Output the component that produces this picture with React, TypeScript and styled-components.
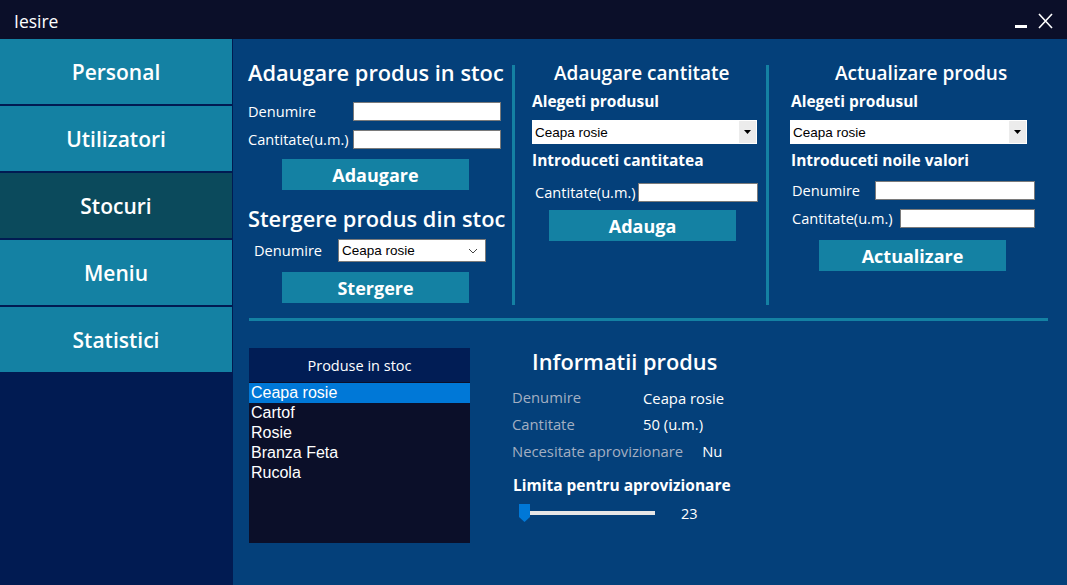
import React from "react";
import styled, { createGlobalStyle } from "styled-components";

const C = {
  title: "#0b0f29",
  teal: "#1481a3",
  navActive: "#0b4a5c",
  sideBg: "#011b52",
  main: "#04407a",
  listHead: "#011d55",
  listBg: "#0b0f29",
  select: "#0078d7",
  muted: "#a3afc2",
};

const GlobalStyle = createGlobalStyle`
  html, body { margin: 0; padding: 0; }
  body {
    background: ${C.sideBg};
    font-family: "Open Sans", "Noto Sans", sans-serif;
    color: #fff;
    overflow: hidden;
  }
  * { box-sizing: border-box; }
`;

const Window = styled.div`
  width: 1067px;
  height: 585px;
  display: flex;
  flex-direction: column;
`;

const TitleBar = styled.header`
  height: 39px;
  flex: none;
  background: ${C.title};
  display: flex;
  align-items: center;
  justify-content: space-between;
  padding: 3px 14px 0 14px;
`;

const TitleText = styled.span`
  font-size: 17.5px;
  line-height: 20px;
`;

const Controls = styled.div`
  display: flex;
  align-items: center;
  gap: 11px;
`;

const Body = styled.div`
  flex: 1;
  display: flex;
  min-height: 0;
`;

const Sidebar = styled.nav`
  width: 233px;
  flex: none;
  background: ${C.sideBg};
  display: flex;
  flex-direction: column;
  gap: 2px;
  padding-right: 1px;
`;

const NavButton = styled.div<{ $active?: boolean }>`
  height: 65px;
  background: ${(p) => (p.$active ? C.navActive : C.teal)};
  display: flex;
  align-items: center;
  justify-content: center;
  font-size: 21px;
  font-weight: 600;
`;

const Main = styled.main`
  flex: 1;
  background: ${C.main};
  padding: 21px 17px 0 15px;
  display: flex;
  flex-direction: column;
`;

const TopRow = styled.div`
  display: grid;
  grid-template-columns: 264px 3px 251px 3px 1fr;
  align-items: start;
`;

const VDivider = styled.div`
  width: 3px;
  height: 240px;
  margin-top: 5px;
  background: ${C.teal};
`;

const Column = styled.section<{ $pad: number }>`
  display: flex;
  flex-direction: column;
  align-items: flex-start;
  padding-left: ${(p) => p.$pad}px;
`;

const BigHeading = styled.h2<{ $mt?: number }>`
  margin: ${(p) => p.$mt ?? 0}px 0 0 0;
  font-size: 21.8px;
  font-weight: 600;
  line-height: 26px;
  white-space: nowrap;
`;

const SectionHeading = styled.h2<{ $indent: number }>`
  margin: 0 0 0 ${(p) => p.$indent}px;
  font-size: 19px;
  font-weight: 600;
  line-height: 26px;
  white-space: nowrap;
`;

const SubLabel = styled.div<{ $mt: number; $indent?: number }>`
  margin-top: ${(p) => p.$mt}px;
  padding-left: ${(p) => p.$indent ?? 0}px;
  font-size: 15.5px;
  font-weight: 700;
  line-height: 22px;
  white-space: nowrap;
`;

const FormRow = styled.div<{ $mt: number; $indent?: number }>`
  display: flex;
  align-items: center;
  margin-top: ${(p) => p.$mt}px;
  padding-left: ${(p) => p.$indent ?? 0}px;
`;

const FieldLabel = styled.label<{ $w: number }>`
  width: ${(p) => p.$w}px;
  flex: none;
  font-size: 14.6px;
  line-height: 19px;
  white-space: nowrap;
`;

const TextBox = styled.div<{ $w: number }>`
  width: ${(p) => p.$w}px;
  height: 19px;
  background: #fff;
  border: 1px solid #7a7a7a;
`;

const ActionButton = styled.div<{ $mt: number; $ml: number }>`
  width: 187px;
  height: 31px;
  margin-top: ${(p) => p.$mt}px;
  margin-left: ${(p) => p.$ml}px;
  background: ${C.teal};
  display: flex;
  align-items: center;
  justify-content: center;
  font-size: 18px;
  font-weight: 700;
`;

const SelectBox = styled.div<{ $w: number }>`
  width: ${(p) => p.$w}px;
  height: 23px;
  background: #fff;
  border: 1px solid #7a7a7a;
  display: flex;
  align-items: center;
  justify-content: space-between;
  padding: 0 7px 0 3px;
  color: #000;
  font-family: "Liberation Sans", Arial, sans-serif;
  font-size: 13.5px;
`;

const Combo = styled.div<{ $w: number; $mt: number }>`
  width: ${(p) => p.$w}px;
  height: 24px;
  margin-top: ${(p) => p.$mt}px;
  background: #fff;
  display: flex;
  align-items: stretch;
  color: #000;
  font-family: "Liberation Sans", Arial, sans-serif;
  font-size: 13.5px;
`;

const ComboText = styled.span`
  flex: 1;
  display: flex;
  align-items: center;
  padding-left: 3px;
`;

const ComboButton = styled.span`
  width: 17px;
  margin: 1px 1px 1px 0;
  background: #ececec;
  display: flex;
  align-items: center;
  justify-content: center;
`;

const HRule = styled.div`
  height: 3px;
  width: 799px;
  margin: 13px 0 0 1px;
  background: ${C.teal};
`;

const BottomRow = styled.div`
  display: flex;
  align-items: flex-start;
  margin-top: 27px;
`;

const ListBox = styled.div`
  width: 221px;
  height: 195px;
  margin-left: 1px;
  background: ${C.listBg};
  display: flex;
  flex-direction: column;
`;

const ListHeader = styled.div`
  height: 34px;
  background: ${C.listHead};
  display: flex;
  align-items: center;
  justify-content: center;
  font-size: 14.5px;
  padding-top: 1px;
`;

const ListItems = styled.ul`
  list-style: none;
  margin: 0;
  padding: 1px 0 0 0;
`;

const ListItem = styled.li<{ $selected?: boolean }>`
  height: 20px;
  line-height: 20px;
  padding-left: 2px;
  font-family: "Liberation Sans", Arial, sans-serif;
  font-size: 16px;
  background: ${(p) => (p.$selected ? C.select : "transparent")};
`;

const InfoPanel = styled.section`
  margin-left: 42px;
  display: flex;
  flex-direction: column;
  align-items: flex-start;
`;

const InfoHeading = styled.h2`
  margin: 0 0 0 20px;
  font-size: 21.8px;
  font-weight: 600;
  line-height: 28px;
  white-space: nowrap;
`;

const InfoRows = styled.dl`
  margin: 7px 0 0 0;
  display: flex;
  flex-direction: column;
`;

const InfoRow = styled.div`
  display: flex;
  align-items: center;
  height: 27px;
  font-size: 14.8px;
`;

const InfoLabel = styled.dt`
  min-width: 131px;
  padding-right: 19px;
  color: ${C.muted};
  white-space: nowrap;
`;

const InfoValue = styled.dd<{ $dy?: number }>`
  margin: 0;
  padding-top: ${(p) => p.$dy ?? 0}px;
  white-space: nowrap;
`;

const SliderRow = styled.div`
  display: flex;
  align-items: center;
  height: 20px;
  margin-top: 7px;
  margin-left: 7px;
`;

const SliderTrack = styled.div`
  position: relative;
  width: 136px;
  height: 20px;
  display: flex;
  align-items: center;
`;

const TrackLine = styled.div`
  margin-left: 4px;
  width: 132px;
  height: 4px;
  background: #e6e6e6;
`;

const Thumb = styled.svg`
  position: absolute;
  left: 0;
  top: 1px;
`;

const SliderValue = styled.span`
  margin-left: 26px;
  font-size: 14.5px;
`;

const Chevron = () => (
  <svg width="10" height="6" viewBox="0 0 10 6">
    <path d="M1 1 L5 5 L9 1" fill="none" stroke="#444" strokeWidth="1" />
  </svg>
);

const Triangle = () => (
  <svg width="7" height="4" viewBox="0 0 7 4">
    <polygon points="0,0 7,0 3.5,4" fill="#000" />
  </svg>
);

const ComboSelect = ({ w, mt }: { w: number; mt: number }) => (
  <Combo $w={w} $mt={mt}>
    <ComboText>Ceapa rosie</ComboText>
    <ComboButton>
      <Triangle />
    </ComboButton>
  </Combo>
);

const navItems = ["Personal", "Utilizatori", "Stocuri", "Meniu", "Statistici"];
const products = ["Ceapa rosie", "Cartof", "Rosie", "Branza Feta", "Rucola"];

export default function App() {
  return (
    <>
      <GlobalStyle />
      <Window>
        <TitleBar>
          <TitleText>Iesire</TitleText>
          <Controls>
            <svg width="13" height="18" viewBox="0 0 13 18">
              <rect x="1" y="13" width="12" height="3" fill="#fff" />
            </svg>
            <svg width="15" height="16" viewBox="0 0 15 16">
              <path d="M1 1 L14 15 M14 1 L1 15" stroke="#fff" strokeWidth="1.6" fill="none" />
            </svg>
          </Controls>
        </TitleBar>
        <Body>
          <Sidebar>
            {navItems.map((n) => (
              <NavButton key={n} $active={n === "Stocuri"}>
                {n}
              </NavButton>
            ))}
          </Sidebar>
          <Main>
            <TopRow>
              <Column $pad={0}>
                <BigHeading>Adaugare produs in stoc</BigHeading>
                <FormRow $mt={16}>
                  <FieldLabel $w={105}>Denumire</FieldLabel>
                  <TextBox $w={148} />
                </FormRow>
                <FormRow $mt={9}>
                  <FieldLabel $w={105}>Cantitate(u.m.)</FieldLabel>
                  <TextBox $w={148} />
                </FormRow>
                <ActionButton $mt={10} $ml={34}>Adaugare</ActionButton>
                <BigHeading $mt={16}>Stergere produs din stoc</BigHeading>
                <FormRow $mt={7} $indent={6}>
                  <FieldLabel $w={84}>Denumire</FieldLabel>
                  <SelectBox $w={148}>
                    <span>Ceapa rosie</span>
                    <Chevron />
                  </SelectBox>
                </FormRow>
                <ActionButton $mt={10} $ml={34}>Stergere</ActionButton>
              </Column>
              <VDivider />
              <Column $pad={17}>
                <SectionHeading $indent={22}>Adaugare cantitate</SectionHeading>
                <SubLabel $mt={4}>Alegeti produsul</SubLabel>
                <ComboSelect w={225} mt={8} />
                <SubLabel $mt={5}>Introduceti cantitatea</SubLabel>
                <FormRow $mt={12} $indent={3}>
                  <FieldLabel $w={103}>Cantitate(u.m.)</FieldLabel>
                  <TextBox $w={120} />
                </FormRow>
                <ActionButton $mt={8} $ml={17}>Adauga</ActionButton>
              </Column>
              <VDivider />
              <Column $pad={21}>
                <SectionHeading $indent={45}>Actualizare produs</SectionHeading>
                <SubLabel $mt={4} $indent={1}>Alegeti produsul</SubLabel>
                <ComboSelect w={237} mt={8} />
                <SubLabel $mt={5} $indent={1}>Introduceti noile valori</SubLabel>
                <FormRow $mt={10} $indent={2}>
                  <FieldLabel $w={83}>Denumire</FieldLabel>
                  <TextBox $w={160} />
                </FormRow>
                <FormRow $mt={9} $indent={2}>
                  <FieldLabel $w={108}>Cantitate(u.m.)</FieldLabel>
                  <TextBox $w={135} />
                </FormRow>
                <ActionButton $mt={12} $ml={29}>Actualizare</ActionButton>
              </Column>
            </TopRow>
            <HRule />
            <BottomRow>
              <ListBox>
                <ListHeader>Produse in stoc</ListHeader>
                <ListItems>
                  {products.map((p, i) => (
                    <ListItem key={p} $selected={i === 0}>
                      {p}
                    </ListItem>
                  ))}
                </ListItems>
              </ListBox>
              <InfoPanel>
                <InfoHeading>Informatii produs</InfoHeading>
                <InfoRows>
                  <InfoRow>
                    <InfoLabel>Denumire</InfoLabel>
                    <InfoValue $dy={2}>Ceapa rosie</InfoValue>
                  </InfoRow>
                  <InfoRow>
                    <InfoLabel>Cantitate</InfoLabel>
                    <InfoValue $dy={1}>50 (u.m.)</InfoValue>
                  </InfoRow>
                  <InfoRow>
                    <InfoLabel>Necesitate aprovizionare</InfoLabel>
                    <InfoValue>Nu</InfoValue>
                  </InfoRow>
                </InfoRows>
                <SubLabel $mt={10} $indent={1}>Limita pentru aprovizionare</SubLabel>
                <SliderRow>
                  <SliderTrack>
                    <TrackLine />
                    <Thumb width="11" height="18" viewBox="0 0 11 18">
                      <path d="M0 0 H11 V13 L5.5 18 L0 13 Z" fill="#0078d7" />
                    </Thumb>
                  </SliderTrack>
                  <SliderValue>23</SliderValue>
                </SliderRow>
              </InfoPanel>
            </BottomRow>
          </Main>
        </Body>
      </Window>
    </>
  );
}
